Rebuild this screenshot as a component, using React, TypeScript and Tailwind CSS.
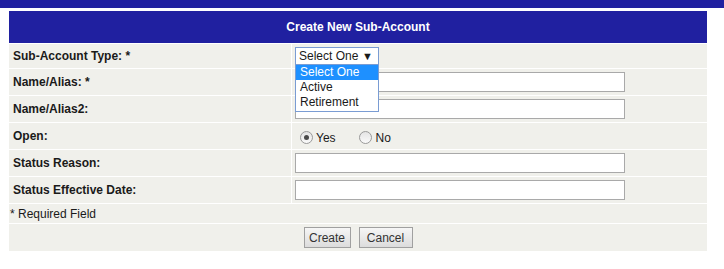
import React from 'react';

const rows = [
  { label: 'Name/Alias: *', type: 'text' },
  { label: 'Name/Alias2:', type: 'text' },
  { label: 'Open:', type: 'radio' },
  { label: 'Status Reason:', type: 'text' },
  { label: 'Status Effective Date:', type: 'text' },
];

const Radio = ({ checked }: { checked?: boolean }) => (
  <span className="inline-flex h-[13px] w-[13px] items-center justify-center rounded-full border border-[#9a9a9a] bg-gradient-to-b from-[#e4e4e4] to-[#fafafa]">
    {checked && <span className="h-[5px] w-[5px] rounded-full bg-[#4a4a4a]" />}
  </span>
);

export default function App() {
  return (
    <div className="min-h-[269px] bg-white font-['Liberation_Sans',Arial,sans-serif] text-[12px] text-[#1a1a1a]">
      <div className="h-[8px] bg-[#2020a0]" />
      <div className="pl-[8px] pt-[2px]">
        <table className="w-[700px] border-separate border-spacing-[1px]">
          <tbody>
            <tr>
              <td colSpan={2} className="h-[32px] bg-[#2020a0] text-center font-bold text-white">
                Create New Sub-Account
              </td>
            </tr>
            <tr>
              <td className="h-[24px] w-[282px] bg-[#f0f0eb] pl-[4px] font-bold">Sub-Account Type: *</td>
              <td className="relative bg-[#f0f0eb] pl-[3px]">
                <div className="flex h-[18px] w-[84px] items-center justify-between border border-[#7a9cd3] bg-white pl-[3px] pr-[5px]">
                  <span>Select One</span>
                  <span className="text-[11px] leading-none">▼</span>
                </div>
                <div className="absolute left-[3px] top-[20px] z-10 w-[84px] border border-[#7a9cd3] bg-white pb-[1px]">
                  <div className="h-[15px] bg-[#1e90ff] pl-[4px] leading-[15px] text-white">Select One</div>
                  <div className="h-[15px] pl-[4px] leading-[15px]">Active</div>
                  <div className="h-[15px] pl-[4px] leading-[15px]">Retirement</div>
                </div>
              </td>
            </tr>
            {rows.map((r) => (
              <tr key={r.label}>
                <td className="h-[26px] bg-[#f0f0eb] pl-[4px] font-bold">{r.label}</td>
                <td className="bg-[#f0f0eb] pl-[3px]">
                  {r.type === 'text' ? (
                    <div className="h-[20px] w-[330px] border border-[#a9a9a9] bg-white" />
                  ) : (
                    <div className="flex items-center pl-[5px] pt-[3px]">
                      <Radio checked />
                      <span className="ml-[3px]">Yes</span>
                      <span className="ml-[23px] flex"><Radio /></span>
                      <span className="ml-[4px]">No</span>
                    </div>
                  )}
                </td>
              </tr>
            ))}
            <tr>
              <td colSpan={2} className="h-[19px] bg-[#f0f0eb] pl-[1px]">* Required Field</td>
            </tr>
            <tr>
              <td colSpan={2} className="h-[27px] bg-[#f0f0eb] text-center">
                <div className="flex justify-center gap-[8px]">
                  <button className="h-[21px] w-[47px] border border-[#a0a0a0] bg-gradient-to-b from-[#f6f6f6] to-[#dcdcdc] text-[#333]">Create</button>
                  <button className="h-[21px] w-[54px] border border-[#a0a0a0] bg-gradient-to-b from-[#f6f6f6] to-[#dcdcdc] text-[#333]">Cancel</button>
                </div>
              </td>
            </tr>
          </tbody>
        </table>
      </div>
    </div>
  );
}
